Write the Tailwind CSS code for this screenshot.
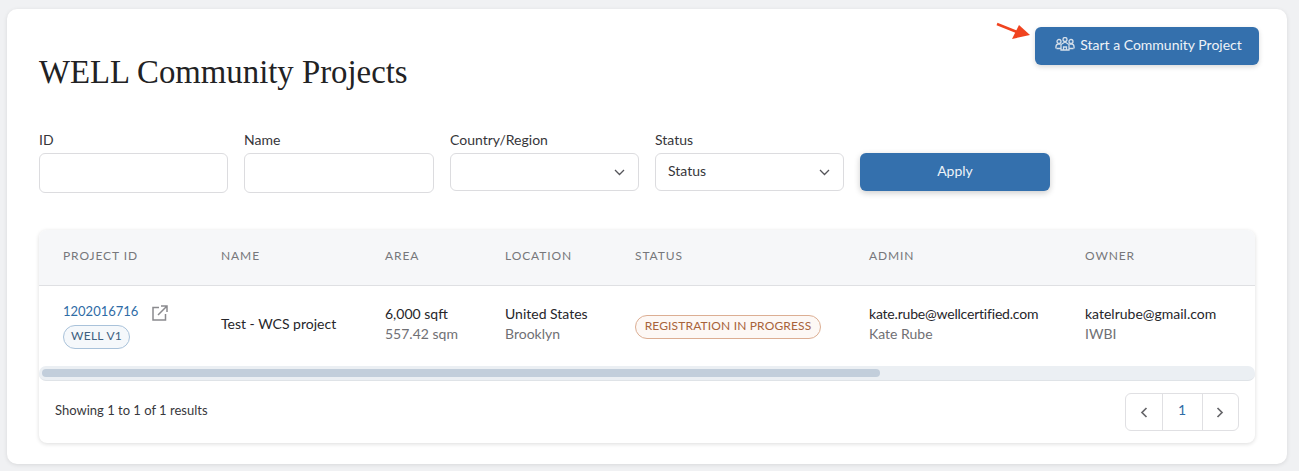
<!DOCTYPE html>
<html lang="en">
<head>
  <meta charset="UTF-8" />
  <meta name="viewport" content="width=device-width, initial-scale=1.0" />
  <title>WELL Community Projects</title>
  <script src="https://cdn.jsdelivr.net/npm/@tailwindcss/browser@4"></script>
</head>
<body class="bg-[#f0f1f3] h-[471px] overflow-hidden font-['Lato',sans-serif] text-[14px] text-[#26262a]">
  <main class="relative ml-[7px] mt-[9px] w-[1280px] h-[455px] bg-white rounded-[10px] shadow-[0_1px_4px_rgba(0,0,0,0.1)] pl-[32px] pr-[32px]">
    <!-- arrow pointing at the button -->
    <svg class="absolute left-[988px] top-[12px] w-[40px] h-[20px]" viewBox="0 0 40 20">
      <path d="M2 3 L22 11" stroke="#f0431f" stroke-width="2.5" fill="none"/>
      <path d="M35 14 L17 18 L24 4 Z" fill="#f0431f"/>
    </svg>

    <header class="flex justify-between items-start h-[122px]">
      <h1 class="mt-[42px] font-['Liberation_Serif',serif] text-[32.8px] leading-[42px] text-[#222224]">WELL Community Projects</h1>
      <button class="mt-[18px] -mr-[4px] w-[224px] h-[38px] pb-[4px] pl-[3px] flex items-center justify-center gap-[5px] rounded-[6px] bg-[#3470ad] text-[#eef3f8] text-[14px] shadow-[0_2px_5px_rgba(0,0,0,0.15)]">
        <svg class="w-[20px] h-[14px]" viewBox="0 0 20 14" fill="none" stroke="#d5dfea" stroke-width="1.300">
          <circle cx="4" cy="4.500" r="2"/><circle cx="10" cy="2.500" r="2"/><circle cx="16" cy="4.500" r="2"/>
          <path d="M1 11.500 Q0.500 7.500 3 7 H5.500 M19 11.500 Q19.500 7.500 17 7 H14.500"/>
          <path d="M6 13 V7.500 L10 5 L14 7.500 V13 Z"/>
          <path d="M8.500 13 V10 H11.500 V13 M1.500 11.500 H6 M14 11.500 H18.500"/>
        </svg>
        Start a Community Project
      </button>
    </header>

    <form class="flex items-start gap-[16px] h-[99px] text-[#36363a]">
      <label class="block w-[189px]">
        <span class="block h-[22px] leading-[18px]">ID</span>
        <input type="text" class="block w-full h-[40px] rounded-[6px] border border-[#dcdcdf] bg-white" />
      </label>
      <label class="block w-[190px]">
        <span class="block h-[22px] leading-[18px]">Name</span>
        <input type="text" class="block w-full h-[40px] rounded-[6px] border border-[#dcdcdf] bg-white" />
      </label>
      <div class="w-[189px]">
        <span class="block h-[22px] leading-[18px]">Country/Region</span>
        <div class="flex items-center justify-end h-[38px] rounded-[6px] border border-[#dcdcdf] pr-[13px]">
          <svg class="w-[11px] h-[7px]" viewBox="0 0 11 7" fill="none" stroke="#55555a" stroke-width="1.300"><path d="M1 1 L5.500 5.500 L10 1"/></svg>
        </div>
      </div>
      <div class="w-[189px]">
        <span class="block h-[22px] leading-[18px]">Status</span>
        <div class="flex items-center justify-between h-[38px] rounded-[6px] border border-[#dcdcdf] pl-[12px] pr-[13px]">
          <span class="-mt-[4px]">Status</span>
          <svg class="w-[11px] h-[7px]" viewBox="0 0 11 7" fill="none" stroke="#55555a" stroke-width="1.300"><path d="M1 1 L5.500 5.500 L10 1"/></svg>
        </div>
      </div>
      <button type="button" class="mt-[22px] w-[190px] h-[38px] pb-[4px] rounded-[6px] bg-[#3470ad] text-[#eef3f8] shadow-[0_2px_6px_rgba(0,0,0,0.2)]">Apply</button>
    </form>

    <section class="w-[1216px] h-[213px] rounded-[8px] bg-white shadow-[0_1px_4px_rgba(0,0,0,0.14)] overflow-hidden">
      <div class="grid grid-cols-[158px_164px_120px_130px_234px_216px_1fr] h-[56px] pb-[4px] items-center pl-[24px] bg-[#f6f7f9] border-b border-[#dfe0e3] text-[12px] tracking-[0.9px] text-[#77777b]">
        <span>PROJECT ID</span><span>NAME</span><span>AREA</span><span>LOCATION</span><span>STATUS</span><span>ADMIN</span><span>OWNER</span>
      </div>
      <div class="grid grid-cols-[158px_164px_120px_130px_234px_216px_1fr] h-[80px] items-center pl-[24px]">
        <div>
          <div class="flex items-center gap-[14px]">
            <a class="-translate-y-[1px] text-[13px] text-[#2f6ca6]">1202016716</a>
            <svg class="w-[16px] h-[16px]" viewBox="0 0 16 16" fill="none" stroke="#8a8a8e" stroke-width="1.500"><path d="M7 2.500 H1 V15 H13.500 V9"/><path d="M6 10 L15 1 M9 1 H15 V7"/></svg>
          </div>
          <span class="mt-[2px] inline-flex items-center justify-center w-[67px] h-[24px] pb-[2px] rounded-full border border-[#a9c2da] bg-[#f5f8fb] text-[12px] tracking-[0.3px] text-[#3d5f80]">WELL V1</span>
        </div>
        <div class="-mt-[5px]">Test - WCS project</div>
        <div class="-mt-[4px] leading-[20px]">6,000 sqft<br /><span class="text-[#707074]">557.42 sqm</span></div>
        <div class="-mt-[4px] leading-[20px]">United States<br /><span class="text-[#707074]">Brooklyn</span></div>
        <div><span class="inline-flex items-center justify-center w-[186px] h-[24px] pb-[2px] rounded-full border border-[#dcae93] bg-[#fdf8f5] text-[12px] tracking-[0.15px] text-[#a8633a]">REGISTRATION IN PROGRESS</span></div>
        <div class="-mt-[4px] leading-[20px]"><span class="tracking-[-0.2px]">kate.rube@wellcertified.com</span><br /><span class="text-[#707074]">Kate Rube</span></div>
        <div class="-mt-[4px] leading-[20px]">katelrube@gmail.com<br /><span class="text-[#707074]">IWBI</span></div>
      </div>
      <div class="h-[15px] bg-[#ebeff3] border-b border-[#dfe3e7] rounded-[7px] pl-[3px] pt-[3px]">
        <div class="w-[838px] h-[8px] rounded-full bg-[#c2cedb]"></div>
      </div>
      <div class="flex items-center justify-between h-[62px] pl-[16px] pr-[16px]">
        <span class="-mt-[2px] text-[13px] text-[#38383c]">Showing 1 to 1 of 1 results</span>
        <nav class="flex h-[38px] w-[114px] rounded-[6px] border border-[#e0e0e3]">
          <span class="flex flex-1 items-center justify-center border-r border-[#e0e0e3]">
            <svg class="w-[8px] h-[11px]" viewBox="0 0 8 11" fill="none" stroke="#66666a" stroke-width="1.700"><path d="M6.500 1 L2 5.500 L6.500 10"/></svg>
          </span>
          <span class="flex w-[39px] items-center justify-center pb-[6px] text-[#2f6ca6]">1</span>
          <span class="flex flex-1 items-center justify-center border-l border-[#e0e0e3]">
            <svg class="w-[8px] h-[11px]" viewBox="0 0 8 11" fill="none" stroke="#66666a" stroke-width="1.700"><path d="M1.500 1 L6 5.500 L1.500 10"/></svg>
          </span>
        </nav>
      </div>
    </section>
  </main>
</body>
</html>
